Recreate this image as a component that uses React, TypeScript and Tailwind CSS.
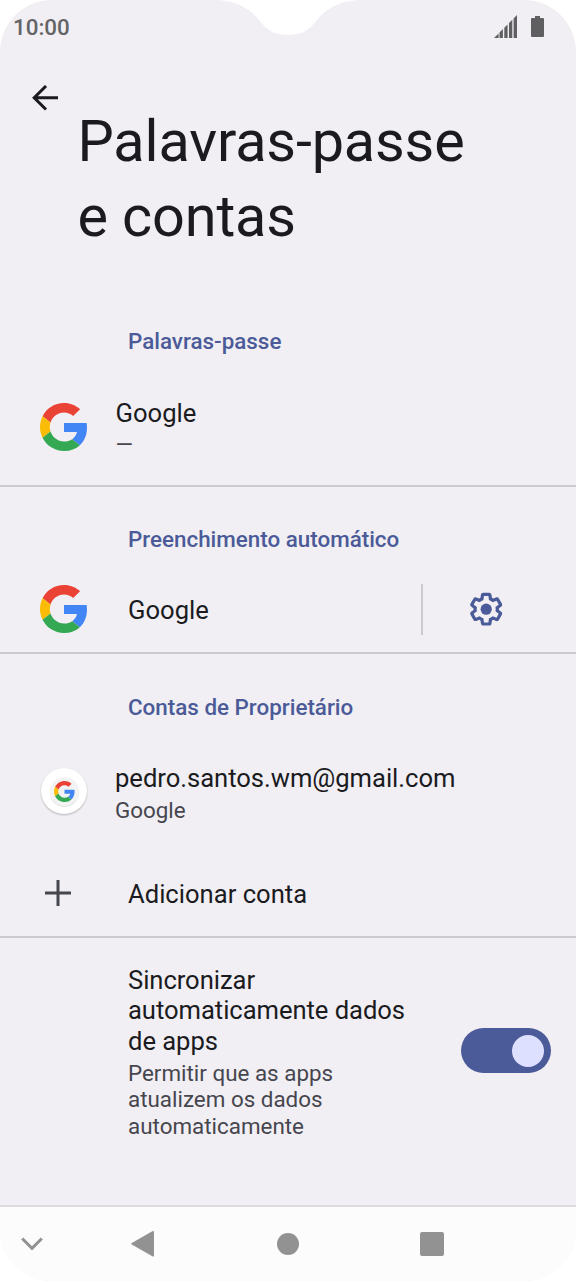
import { ReactNode } from "react";

function GoogleLogo({ size }: { size: number }) {
    return (
        <svg width={size} height={size} viewBox="0 0 48 48" className="shrink-0">
            <path fill="#EA4335" d="M24 9.5c3.54 0 6.71 1.22 9.21 3.6l6.85-6.85C35.9 2.38 30.47 0 24 0 14.62 0 6.51 5.38 2.56 13.22l7.98 6.19C12.43 13.72 17.74 9.5 24 9.5z" />
            <path fill="#4285F4" d="M46.98 24.55c0-1.57-.15-3.09-.38-4.55H24v9.02h12.94c-.58 2.96-2.26 5.48-4.78 7.18l7.73 6c4.51-4.18 7.09-10.36 7.09-17.65z" />
            <path fill="#FBBC05" d="M10.53 28.59c-.48-1.45-.76-2.99-.76-4.59s.27-3.14.76-4.59l-7.98-6.19C.92 16.46 0 20.12 0 24c0 3.88.92 7.54 2.56 10.78l7.97-6.19z" />
            <path fill="#34A853" d="M24 48c6.48 0 11.93-2.13 15.89-5.81l-7.73-6c-2.15 1.45-4.92 2.3-8.16 2.3-6.26 0-11.57-4.22-13.47-9.91l-7.98 6.19C6.51 42.62 14.62 48 24 48z" />
        </svg>
    );
}

function GearIcon() {
    return (
        <svg width="38.4" height="38.4" viewBox="0 0 24 24" fill="#4B5A98">
            <path fillRule="evenodd" d="M13.85,22.25h-3.7c-0.74,0 -1.36,-0.54 -1.45,-1.27l-0.27,-1.89c-0.27,-0.14 -0.53,-0.29 -0.79,-0.46l-1.8,0.72c-0.7,0.26 -1.47,-0.03 -1.81,-0.65L2.2,15.53c-0.35,-0.66 -0.2,-1.44 0.36,-1.88l1.53,-1.19c-0.01,-0.15 -0.02,-0.3 -0.02,-0.46c0,-0.15 0.01,-0.31 0.02,-0.46l-1.52,-1.19C1.98,9.9 1.83,9.09 2.2,8.47l1.85,-3.19c0.34,-0.62 1.11,-0.9 1.79,-0.63l1.81,0.73c0.26,-0.17 0.52,-0.32 0.78,-0.46l0.27,-1.91c0.09,-0.7 0.71,-1.25 1.44,-1.25h3.7c0.74,0 1.36,0.54 1.45,1.27l0.27,1.89c0.27,0.14 0.53,0.29 0.79,0.46l1.8,-0.72c0.71,-0.26 1.48,0.03 1.82,0.65l1.84,3.18c0.36,0.66 0.2,1.44 -0.36,1.88l-1.52,1.19c0.01,0.15 0.02,0.3 0.02,0.46s-0.01,0.31 -0.02,0.46l1.52,1.19c0.56,0.45 0.72,1.23 0.37,1.86l-1.86,3.22c-0.34,0.62 -1.11,0.9 -1.8,0.63l-1.8,-0.72c-0.26,0.17 -0.52,0.32 -0.78,0.46l-0.27,1.91C15.21,21.71 14.59,22.25 13.85,22.25z M10.62,20.25h2.76l0.37,-2.55l0.53,-0.22c0.44,-0.18 0.88,-0.44 1.34,-0.78l0.45,-0.34l2.38,0.96l1.38,-2.4l-2.03,-1.58l0.07,-0.56c0.03,-0.26 0.06,-0.51 0.06,-0.78c0,-0.27 -0.03,-0.53 -0.06,-0.78l-0.07,-0.56l2.03,-1.58l-1.39,-2.4l-2.39,0.96l-0.45,-0.35c-0.42,-0.32 -0.87,-0.58 -1.33,-0.77L13.75,6.3l-0.37,-2.55h-2.76L10.25,6.3L9.72,6.51C9.28,6.7 8.84,6.95 8.38,7.3L7.93,7.63L5.55,6.68L4.16,9.07l2.03,1.58l-0.07,0.56C6.09,11.47 6.06,11.74 6.06,12c0,0.26 0.02,0.53 0.06,0.78l0.07,0.56l-2.03,1.58l1.38,2.4l2.39,-0.96l0.45,0.35c0.43,0.33 0.86,0.58 1.33,0.77l0.53,0.22L10.62,20.25z" />
            <circle cx="12" cy="12" r="3.5" />
        </svg>
    );
}

function StatusBar() {
    return (
        <div className="h-[55px] flex flex-row items-start justify-between pt-[14px] pl-[13px] pr-[32px]">
            <p className="font-medium text-[22.4px] leading-[26px] text-[#646466]">10:00</p>
            <div className="flex flex-row items-start gap-[13px] pt-px">
                <svg width="24" height="24" viewBox="0 0 24 24" fill="#5f5f61">
                    <path d="M0 23L4.6 18.4V23z M5.5 17.5L8.9 14.1V23H5.5z M10.3 12.7L13.6 9.4V23H10.3z M15 8L18.3 4.7V23H15z M19.6 3.4L23 0V23H19.6z" />
                </svg>
                <svg width="13" height="22" viewBox="0 0 13 22" fill="#5f5f61" className="mt-px">
                    <path d="M4 0H9V2H12Q13 2 13 3V20Q13 21 12 21H1Q0 21 0 20V3Q0 2 1 2H4z" />
                </svg>
            </div>
        </div>
    );
}

function SectionLabel({ children }: { children: ReactNode }) {
    return <h2 className="pl-[128px] font-medium text-[22.4px] leading-[26px] text-[#4B5A98]">{children}</h2>;
}

export default function App() {
    return (
        <div className="w-[576px] h-[1282px] bg-white overflow-hidden">
            <div className="relative w-full h-[1281px] rounded-[52px] bg-[#F1EFF3] overflow-hidden flex flex-col font-['Roboto',sans-serif] text-[#1B1B1F]">
                {/* camera notch */}
                <svg className="absolute top-0 left-[218px]" width="140" height="36" viewBox="0 0 140 36" fill="#fff">
                    <path d="M0 0C17 1 32 8 41 20C49 31 58 35 70 35C82 35 91 31 99 20C108 8 123 1 140 0z" />
                </svg>

                <StatusBar />

                <header className="h-[248px] flex flex-row items-start pl-[32px]">
                    <svg width="26" height="26" viewBox="0 0 26 26" fill="none" stroke="#1B1B1F" strokeWidth="3" className="mt-[30px]">
                        <path d="M26 12.7H3M14 1L2.2 12.7L14 24.5" />
                    </svg>
                    <h1 className="ml-[19.5px] mt-[48.5px] text-[57.6px] leading-[75px] tracking-[-0.15px]">
                        Palavras-passe
                        <br />e contas
                    </h1>
                </header>

                <section className="h-[184px] pt-[25px] border-b-2 border-[#CBC9CE]">
                    <SectionLabel>Palavras-passe</SectionLabel>
                    <div className="mt-[44px] flex flex-row items-start pl-[40px]">
                        <div className="mt-[5px]">
                            <GoogleLogo size={48} />
                        </div>
                        <div className="ml-[27.5px]">
                            <p className="text-[25.6px] leading-[30px]">Google</p>
                            <p className="text-[22.4px] leading-[26px] mt-[3px] tracking-tight text-[#46464F]">—</p>
                        </div>
                    </div>
                </section>

                <section className="h-[167px] pt-[39px] border-b-2 border-[#CBC9CE]">
                    <SectionLabel>Preenchimento automático</SectionLabel>
                    <div className="h-[52px] mt-[31px] flex flex-row items-center pl-[40px]">
                        <GoogleLogo size={48} />
                        <p className="ml-[40px] mt-px w-[293px] text-[25.6px] leading-[30px]">Google</p>
                        <div className="w-[1.5px] h-[51px] bg-[#CBC9CE]"></div>
                        <div className="ml-[44.5px]">
                            <GearIcon />
                        </div>
                    </div>
                </section>

                <section className="h-[284px] pt-[40px] border-b-2 border-[#CBC9CE]">
                    <SectionLabel>Contas de Proprietário</SectionLabel>
                    <div className="mt-[43px] flex flex-row items-start pl-[41px]">
                        <div className="mt-[5px] size-[46px] rounded-full bg-white shadow-[0_1px_2px_rgba(0,0,0,0.25)] flex items-center justify-center">
                            <div className="size-[29px] rounded-full bg-[#F4F3F4] shadow-[0_1px_1px_rgba(0,0,0,0.12)] flex items-center justify-center">
                                <GoogleLogo size={21} />
                            </div>
                        </div>
                        <div className="ml-[28px]">
                            <p className="text-[25.6px] leading-[30px] tracking-[-0.03px]">pedro.santos.wm@gmail.com</p>
                            <p className="text-[22.4px] leading-[26px] mt-[4px] text-[#46464F]">Google</p>
                        </div>
                    </div>
                    <div className="mt-[56px] flex flex-row items-center pl-[44.5px]">
                        <svg width="26" height="26" viewBox="0 0 26 26" stroke="#46464F" strokeWidth="3" className="mb-[3px]">
                            <path d="M0 13H26M13 0V26" />
                        </svg>
                        <p className="ml-[57.5px] text-[25.6px] leading-[30px]">Adicionar conta</p>
                    </div>
                </section>

                <section className="flex-1 flex flex-row items-start pt-[27px] pl-[128px]">
                    <div className="w-[332.5px]">
                        <p className="text-[25.6px] leading-[30.4px] tracking-[-0.05px]">
                            Sincronizar
                            <br />
                            automaticamente dados
                            <br />
                            de apps
                        </p>
                        <p className="mt-[4px] text-[22.4px] leading-[26.2px] text-[#46464F]">
                            Permitir que as apps
                            <br />
                            atualizem os dados
                            <br />
                            automaticamente
                        </p>
                    </div>
                    <button className="mt-[63px] w-[90px] h-[45px] rounded-full bg-[#4B5A98] flex items-center justify-end pr-[6.5px]">
                        <span className="size-[32px] rounded-full bg-[#DEE0FF]"></span>
                    </button>
                </section>

                <nav className="h-[76px] bg-[#FCFCFC] border-t-2 border-[#DCDBDD] flex flex-row items-center pl-[21px]">
                    <svg width="22" height="14" viewBox="0 0 22 14" fill="none" stroke="#929292" strokeWidth="3">
                        <path d="M1.2 1.5L11 11.3L20.8 1.5" />
                    </svg>
                    <svg width="24" height="28" viewBox="0 0 24 28" fill="#929292" className="ml-[88px]">
                        <path d="M0.8 13L21.3 1.2Q23 0.4 23 2V25.5Q23 27 21.3 26.2L0.8 14.6Q-0.4 13.8 0.8 13z" />
                    </svg>
                    <div className="ml-[122px] size-[22px] rounded-full bg-[#929292]"></div>
                    <div className="ml-[121px] size-[24px] rounded-[2px] bg-[#929292]"></div>
                </nav>
            </div>
        </div>
    );
}
